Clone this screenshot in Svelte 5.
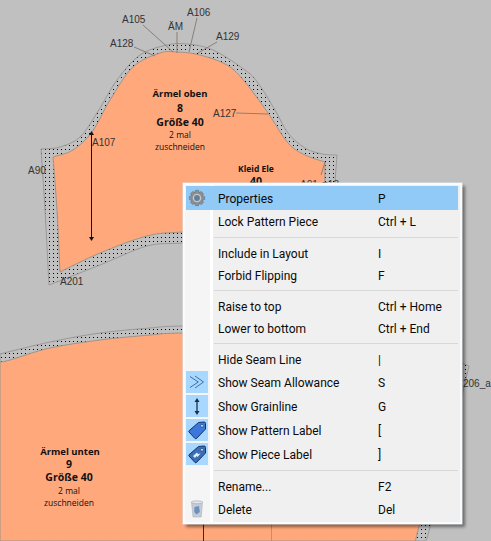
<script lang="ts">
  // pattern outlines, traced as point runs; each run gets smoothed, runs join with straight lines
  type P = [number, number]

  function curve(pts: P[]) {
    let d = ''
    for (let i = 0; i < pts.length - 1; i++) {
      const p0 = pts[i - 1] ?? pts[i], p1 = pts[i], p2 = pts[i + 1], p3 = pts[i + 2] ?? p2
      const c1 = [p1[0] + (p2[0] - p0[0]) / 6, p1[1] + (p2[1] - p0[1]) / 6]
      const c2 = [p2[0] - (p3[0] - p1[0]) / 6, p2[1] - (p3[1] - p1[1]) / 6]
      d += `C${c1[0].toFixed(1)} ${c1[1].toFixed(1)} ${c2[0].toFixed(1)} ${c2[1].toFixed(1)} ${p2[0]} ${p2[1]} `
    }
    return d
  }
  function shape(runs: P[][]) {
    return runs.map((r, i) => `${i ? 'L' : 'M'}${r[0][0]} ${r[0][1]} ${curve(r)}`).join('') + 'Z'
  }

  const topOuter = shape([
    [[41, 149], [60, 147], [80, 137], [97, 113], [117, 80], [140, 55], [167, 45], [187, 44], [213, 50], [245, 70], [258, 83], [275, 110], [288, 133], [305, 148], [322, 154], [337, 155]],
    [[337, 155], [335, 183], [332, 235]],
    [[332, 240], [240, 238], [183, 243], [147, 246], [100, 265], [49, 285]],
    [[49, 285], [45, 210], [41, 149]],
  ])
  const topInner = shape([
    [[53, 157], [73, 150], [92, 132], [110, 100], [133, 67], [160, 53], [177, 52], [200, 55], [227, 65], [245, 82], [268, 113], [288, 143], [305, 155], [325, 162]],
    [[325, 162], [324, 230]],
    [[320, 232], [240, 230], [183, 232], [147, 236], [100, 253], [60, 272]],
    [[60, 272], [57, 210], [53, 157]],
  ])
  const lowOuter = shape([
    [[0, 354], [50, 342], [100, 333], [150, 328], [183, 326], [300, 325], [400, 340], [469, 366]],
    [[469, 366], [431, 523], [425, 541]],
    [[425, 541], [0, 541]],
  ])
  const lowInner = shape([
    [[0, 362], [10, 360], [50, 348], [100, 340], [150, 335], [183, 333], [300, 332], [400, 345], [462, 372]],
    [[462, 372], [420, 523], [416, 541]],
    [[416, 541], [0, 541]],
  ])

  const points = [
    { t: 'A105', x: 122, y: 23, l: [143, 25, 173, 52] },
    { t: 'ÄM', x: 168, y: 30, l: [177, 32, 177, 53] },
    { t: 'A106', x: 187, y: 16, l: [197, 18, 189, 52] },
    { t: 'A128', x: 110, y: 47, l: [134, 47, 155, 56] },
    { t: 'A129', x: 216, y: 40, l: [217, 42, 198, 53] },
    { t: 'A127', x: 213, y: 117, l: [236, 113, 268, 114] },
    { t: 'A107', x: 92, y: 146, l: null },
    { t: 'A90', x: 28, y: 174, l: null },
    { t: 'A201', x: 60, y: 285, l: null },
    { t: 'A01', x: 300, y: 188, l: [325, 162, 321, 175] },
    { t: '=13', x: 322, y: 188, l: null },
    { t: '206_a1', x: 463, y: 387, l: null },
  ]

  const gear = (() => {
    let d = ''
    for (let i = 0; i < 8; i++) {
      const a = (i * Math.PI) / 4
      for (const [r, o] of [[5.6, -0.42], [7.8, -0.2], [7.8, 0.2], [5.6, 0.42]]) {
        d += `${d ? 'L' : 'M'}${(11 + r * Math.cos(a + o)).toFixed(2)} ${(11 + r * Math.sin(a + o)).toFixed(2)} `
      }
    }
    return d + 'Z'
  })()

  const groups = [
    [
      { label: 'Properties', key: 'P', icon: 'gear', tall: true, active: true },
      { label: 'Lock Pattern Piece', key: 'Ctrl + L' },
    ],
    [
      { label: 'Include in Layout', key: 'I' },
      { label: 'Forbid Flipping', key: 'F' },
    ],
    [
      { label: 'Raise to top', key: 'Ctrl + Home' },
      { label: 'Lower to bottom', key: 'Ctrl + End' },
    ],
    [
      { label: 'Hide Seam Line', key: '|' },
      { label: 'Show Seam Allowance', key: 'S', icon: 'seam', tall: true, on: true },
      { label: 'Show Grainline', key: 'G', icon: 'grain', tall: true, on: true },
      { label: 'Show Pattern Label', key: '[', icon: 'tag', tall: true, on: true },
      { label: 'Show Piece Label', key: ']', icon: 'tag2', tall: true, on: true },
    ],
    [
      { label: 'Rename...', key: 'F2' },
      { label: 'Delete', key: 'Del', icon: 'bin', tall: true },
    ],
  ]
</script>

<div class="scene">
  <svg class="canvas" width="491" height="541" viewBox="0 0 491 541">
    <defs>
      <pattern id="dots" width="4" height="4" patternUnits="userSpaceOnUse">
        <rect x="1" y="1" width="1" height="1" fill="#000" />
      </pattern>
    </defs>

    <path d={lowOuter} fill="url(#dots)" stroke="#999" />
    <path d={lowInner} class="body" />
    <path d={topOuter} fill="url(#dots)" stroke="#999" />
    <path d={topInner} class="body" />

    <line x1="203.5" y1="518" x2="203.5" y2="541" stroke="#3a2a20" />
    <line x1="271.5" y1="518" x2="271.5" y2="541" stroke="#d08a64" />

    {#each points as p}
      {#if p.l}
        <line x1={p.l[0]} y1={p.l[1]} x2={p.l[2]} y2={p.l[3]} stroke="#8a8078" />
      {/if}
      <text x={p.x} y={p.y} class="pt">{p.t}</text>
    {/each}

    <line x1="91.5" y1="134" x2="91.5" y2="239" stroke="#111" />
    <path d="M91.5 131 L94 135 H89Z M91.5 241 L94 237 H89Z" fill="#111" />

    <g class="label">
      <text x="180" y="97" class="b">Ärmel oben</text>
      <text x="180" y="112" class="b big">8</text>
      <text x="180" y="126" class="b big">Größe 40</text>
      <text x="180" y="138">2 mal</text>
      <text x="180" y="150">zuschneiden</text>

      <text x="256" y="172" class="b small">Kleid Ele</text>
      <text x="256" y="185" class="b big">40</text>

      <text x="70" y="455" class="b">Ärmel unten</text>
      <text x="69" y="468" class="b big">9</text>
      <text x="69" y="481" class="b big">Größe 40</text>
      <text x="69" y="494">2 mal</text>
      <text x="69" y="506">zuschneiden</text>
    </g>
  </svg>

  <div class="menu">
    {#each groups as group, g}
      {#if g}<div class="sep" class:first={g === 1}></div>{/if}
      {#each group as item}
        <div class="row" class:tall={item.tall} class:active={item.active}>
          <span class="icon" class:on={item.on}>
            {#if item.icon === 'gear'}
              <svg width="22" height="22" viewBox="0 0 22 22">
                <path d={gear} fill="#8b8f93" stroke="#6f7276" stroke-width=".6" />
                <circle cx="11" cy="11" r="3.6" fill="#5f7f9c" stroke="#c4c8cc" stroke-width="1.4" />
              </svg>
            {:else if item.icon === 'seam'}
              <svg width="22" height="22" viewBox="0 0 22 22" fill="none" stroke="#3f6fa8" stroke-width="1">
                <path d="M4 5.5 L12.3 11 L4 16.5" />
                <path d="M9 5 L17.5 11 L9 17" />
              </svg>
            {:else if item.icon === 'grain'}
              <svg width="22" height="22" viewBox="0 0 22 22">
                <line x1="11" y1="6" x2="11" y2="17" stroke="#1f3f66" stroke-width="1.4" />
                <path d="M11 3 L13.5 7 H8.5Z M11 20 L13.5 16 H8.5Z" fill="#1c2f46" />
              </svg>
            {:else if item.icon === 'tag' || item.icon === 'tag2'}
              <svg width="22" height="22" viewBox="0 0 22 22">
                <path d="M12.5 3.5 L18 3 Q19.5 3 19.5 4.5 L19.5 10 L10.5 19.5 Q10 20 9 19.5 L3 13 Q2.5 12.3 3 11.8Z" fill={item.icon === 'tag' ? '#3b78dc' : '#3a6fb8'} stroke="#14306a" />
                <circle cx="16" cy="6.8" r="1.4" fill="#dff0ff" stroke="#14306a" stroke-width=".6" />
                {#if item.icon === 'tag2'}
                  <path d="M7 13 L11 9.5 L12 11 L14.5 10.5 L11.5 14 L10.5 13 L9 15Z" fill="#e6edf6" />
                {/if}
              </svg>
            {:else if item.icon === 'bin'}
              <svg width="22" height="22" viewBox="0 0 22 22">
                <path d="M5.5 4 H16.5 L15.2 19 H7Z" fill="#c4ccd6" stroke="#aab2ba" stroke-width=".6" />
                <ellipse cx="11" cy="4.3" rx="5.6" ry="1.5" fill="#e3e7eb" stroke="#9aa3ac" stroke-width=".6" />
                <path d="M8.5 9 L13 8 L13.8 14 L10.5 16.5 L8.2 14Z" fill="#6f8fc0" />
              </svg>
            {/if}
          </span>
          <span class="text">{item.label}</span>
          <span class="key">{item.key}</span>
        </div>
      {/each}
    {/each}
  </div>
</div>

<style>
  :global(body) { background: #c0c0c0; }

  .scene { position: relative; width: 491px; height: 541px; overflow: hidden; background: #c0c0c0; }
  .canvas { display: block; }
  .body { fill: #ffa87c; stroke: #a09488; stroke-width: 1; }
  .pt { font: 10px "Liberation Sans", sans-serif; fill: #333; }
  .label text { font: 8.5px "Open Sans", sans-serif; fill: #111; text-anchor: middle; }
  .label .b { font-weight: 700; font-size: 9.5px; }
  .label .big { font-size: 10.5px; }
  .label .small { font-size: 8.5px; }

  .menu {
    position: absolute; left: 183px; top: 183px; width: 272px;
    border: 2px solid #fbfbfb; padding: 1px 2px 1px 1px;
    box-shadow: 0 0 0 .5px #dfe6ec, 3px 3px 3px rgba(0,0,0,.45);
    background: linear-gradient(90deg, #f5f5f5 25px, #fff 25px, #fff 28px, #f0f0f0 28px);
    font: 12px Roboto, sans-serif; color: #0a0a0a;
  }
  .row { display: flex; align-items: center; height: 22px; }
  .row.tall { height: 24px; }
  .row.active { background: #91c9f7; }
  .icon { width: 22px; height: 22px; flex-shrink: 0; margin-right: 10px; }
  .icon svg { display: block; }
  .icon.on { background: #a8d8ff; }
  .text { width: 160px; white-space: nowrap; padding-top: 2px; }
  .key { white-space: nowrap; padding-top: 2px; }
  .sep { height: 9px; display: flex; align-items: center; margin-left: 28px; }
  .sep.first { height: 10px; }
  .sep::after { content: ''; flex: 1; height: 1px; background: #d8d8d8; }
</style>
